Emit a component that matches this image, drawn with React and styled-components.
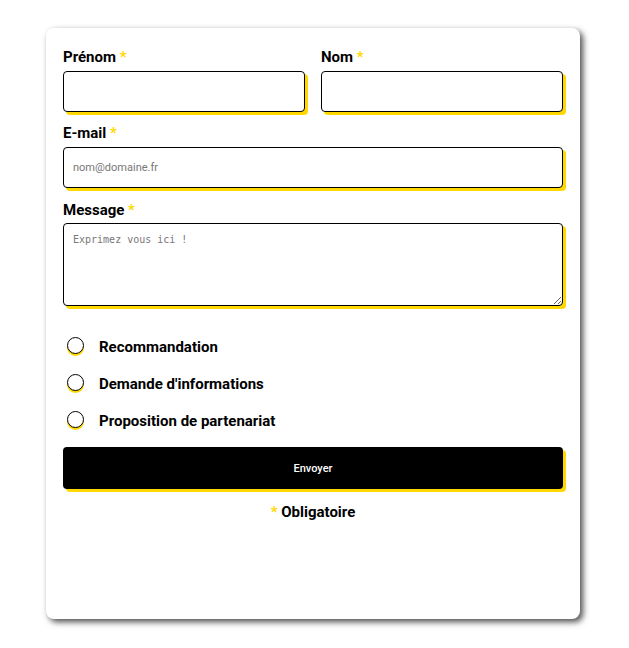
import React from "react";
import styled, { createGlobalStyle } from "styled-components";

const Global = createGlobalStyle`
  html, body { margin: 0; padding: 0; background: #fff; }
  body { font-family: Roboto, "Liberation Sans", sans-serif; }
  * { box-sizing: border-box; }
`;

const YELLOW = "#FFD800";

const Page = styled.div`
  padding: 28px 0 29px 46px;
`;

const Card = styled.form`
  width: 534px;
  height: 591px;
  background: #fff;
  border-radius: 8px;
  box-shadow: 3px 3px 6px rgba(0, 0, 0, 0.7);
  padding: 20px 17px;
  display: flex;
  flex-direction: column;
`;

const Row = styled.div`
  display: grid;
  grid-template-columns: 1fr 1fr;
  gap: 16px;
`;

const Field = styled.div`
  display: flex;
  flex-direction: column;
  margin-bottom: ${(p) => p.$mb ?? 12}px;
`;

const Label = styled.label`
  font-size: 15px;
  font-weight: 700;
  line-height: 18px;
  color: #000;
  margin-bottom: ${(p) => p.$mb ?? 5}px;
`;

const Star = styled.span`
  color: ${YELLOW};
`;

const Input = styled.input`
  height: 41px;
  width: 100%;
  border: 1px solid #000;
  border-radius: 4px;
  box-shadow: 3px 3px 0 ${YELLOW};
  padding: 0 9px;
  font-family: Roboto, "Liberation Sans", sans-serif;
  font-size: 11px;
  outline: none;
  &::placeholder { color: #777; }
`;

const TextArea = styled.textarea`
  height: 83px;
  width: 100%;
  border: 1px solid #000;
  border-radius: 4px;
  box-shadow: 3px 3px 0 ${YELLOW};
  padding: 10px 9px;
  font-family: "DejaVu Sans Mono", monospace;
  font-size: 10px;
  outline: none;
  &::placeholder { color: #777; }
`;

const Options = styled.div`
  display: flex;
  flex-direction: column;
  gap: 17px;
  margin-top: 31px;
  margin-bottom: 16px;
`;

const Option = styled.label`
  display: flex;
  align-items: center;
  gap: 15px;
  padding-left: 4px;
  font-size: 15px;
  font-weight: 700;
  line-height: 20px;
  color: #000;
`;

const Radio = styled.input.attrs({ type: "radio" })`
  appearance: none;
  width: 17px;
  height: 17px;
  margin: -3px 0 0 0;
  border: 1.5px solid #000;
  border-radius: 50%;
  background: #fff;
  box-shadow: 0 2px 0 ${YELLOW};
`;

const Button = styled.button`
  height: 42px;
  width: 100%;
  background: #000;
  color: #fff;
  border: none;
  border-radius: 4px;
  box-shadow: 3px 3px 0 ${YELLOW};
  font-family: Roboto, "Liberation Sans", sans-serif;
  font-size: 11px;
  font-weight: 500;
`;

const Note = styled.p`
  margin: 14px 0 0;
  text-align: center;
  font-size: 15px;
  font-weight: 700;
  line-height: 18px;
`;

export default function App() {
  return (
    <>
      <Global />
      <Page>
        <Card onSubmit={(e) => e.preventDefault()}>
          <Row>
            <Field>
              <Label>Prénom <Star>*</Star></Label>
              <Input />
            </Field>
            <Field>
              <Label>Nom <Star>*</Star></Label>
              <Input />
            </Field>
          </Row>
          <Field $mb={13}>
            <Label>E-mail <Star>*</Star></Label>
            <Input placeholder="nom@domaine.fr" />
          </Field>
          <Field $mb={0}>
            <Label $mb={4}>Message <Star>*</Star></Label>
            <TextArea placeholder="Exprimez vous ici !" />
          </Field>
          <Options>
            <Option><Radio name="r" />Recommandation</Option>
            <Option><Radio name="r" />Demande d'informations</Option>
            <Option><Radio name="r" />Proposition de partenariat</Option>
          </Options>
          <Button type="submit">Envoyer</Button>
          <Note><Star>*</Star> Obligatoire</Note>
        </Card>
      </Page>
    </>
  );
}
